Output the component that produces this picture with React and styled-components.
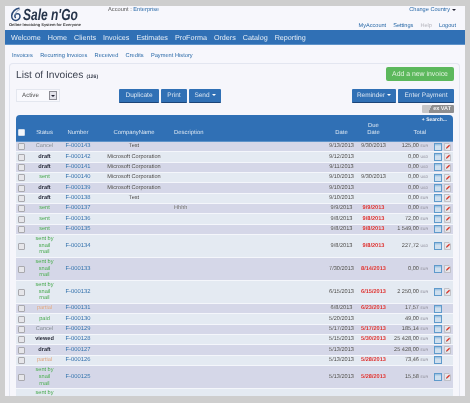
import React from 'react'
import styled, { createGlobalStyle } from 'styled-components'

const GlobalStyle = createGlobalStyle`
  html, body {
    margin: 0;
    padding: 0;
    height: 403px;
    overflow: hidden;
    background: #cecece;
    font-family: "Liberation Sans", Arial, sans-serif;
    text-rendering: geometricPrecision;
  }
  * { box-sizing: border-box; }
`

const Page = styled.div`
  width: 460px;
  height: 390px;
  margin: 6px 5px 0;
  background: #f7f7fc;
  overflow: hidden;
  filter: blur(0.3px);
`

const Header = styled.div`
  height: 24px;
  display: flex;
  padding: 0 5px 0 4px;
`

const Logo = styled.div`
  width: 99px;
  color: #2a3546;
`

const LogoTop = styled.div`
  display: flex;
  align-items: flex-end;
  height: 16px;
  gap: 1px;
  padding-left: 1px;
`

const LogoName = styled.span`
  font-size: 16px;
  line-height: 16px;
  font-weight: bold;
  font-style: italic;
  color: #26344a;
  transform: translateY(1.5px) scaleX(0.75);
  transform-origin: left center;
  white-space: nowrap;
`

const Tagline = styled.div`
  font-size: 4px;
  line-height: 5px;
  font-weight: bold;
  color: #333;
  white-space: nowrap;
`

const AccountLine = styled.div`
  flex: 1;
  padding-top: 1px;
  font-size: 5.7px;
  color: #555;
  span { color: #2a6aa8; }
`

const TopRight = styled.div`
  display: flex;
  flex-direction: column;
  align-items: flex-end;
  justify-content: space-between;
  padding: 1px 4px 1px 0;
  font-size: 5.6px;
  color: #2a6aa8;
`

const TopLinks = styled.div`
  display: flex;
  gap: 7px;
`

const TopLink = styled.span`
  color: ${props => props.muted ? '#b5b5bd' : '#2a6aa8'};
`

const Caret = styled.i`
  display: inline-block;
  margin-left: 2px;
  border-left: 2px solid transparent;
  border-right: 2px solid transparent;
  border-top: 2px solid ${props => props.color || '#223'};
  vertical-align: middle;
`

const Nav = styled.div`
  height: 15px;
  display: flex;
  align-items: center;
  gap: 7px;
  padding-left: 6px;
  background: #3070b5;
  border-bottom: 1px solid #5f93c9;
  font-size: 7.2px;
  color: #e6eef7;
`

const SubNav = styled.div`
  height: 18px;
  display: flex;
  align-items: center;
  gap: 7.3px;
  padding: 3px 0 0 7px;
  font-size: 5.7px;
  color: #2a6aa8;
`

const Panel = styled.div`
  margin: 0 5px 0 4px;
  height: 340px;
  padding: 0 6px;
  border: 1px solid #e3e6f0;
  border-bottom: 0;
  border-radius: 4px 4px 0 0;
  background: #f6f6fb;
`

const TitleRow = styled.div`
  display: flex;
  justify-content: space-between;
  align-items: flex-start;
  height: 24px;
  padding-top: 3px;
`

const Title = styled.h1`
  margin: 3px 0 0;
  font-size: 10.2px;
  font-weight: normal;
  color: #3c4250;
  small {
    font-size: 5px;
    font-weight: bold;
    margin-left: 3px;
  }
`

const GreenButton = styled.div`
  width: 68px;
  height: 14px;
  display: flex;
  align-items: center;
  justify-content: center;
  margin-right: -1px;
  background: #5cb85c;
  border-radius: 2px;
  color: #e4f3e2;
  font-size: 6.9px;
`

const ToolRow = styled.div`
  display: flex;
  align-items: center;
  height: 15px;
`

const SelectBox = styled.div`
  flex: none;
  width: 44px;
  height: 13px;
  display: flex;
  align-items: center;
  justify-content: space-between;
  padding: 0 2px 0 5px;
  border: 1px solid #e4e7ef;
  background: #f9f9fd;
  font-size: 6.2px;
  color: #555;
`

const SelectArrow = styled.div`
  width: 8px;
  height: 9px;
  display: flex;
  align-items: center;
  justify-content: center;
  background: #e3e3ea;
  border: 1px solid #8b8b93;
  i { margin: 0; }
`

const ButtonGroup = styled.div`
  flex: none;
  display: flex;
  gap: 2px;
  margin-left: ${props => props.left || 0}px;
`

const BlueButton = styled.div`
  width: ${props => props.w}px;
  height: 14px;
  display: flex;
  align-items: center;
  justify-content: center;
  background: #3070b5;
  border-bottom: 1px solid #1b4478;
  border-radius: 1px;
  color: #d9e5f2;
  font-size: 6.5px;
`

const VatRow = styled.div`
  display: flex;
  justify-content: flex-end;
  height: 13px;
  padding-top: 2px;
  margin-right: -1px;
`

const VatToggle = styled.div`
  width: 32px;
  height: 8px;
  display: flex;
  align-items: center;
  justify-content: flex-end;
  padding-right: 3px;
  background: linear-gradient(115deg, #c6c6c8 0 28%, #8e8e90 28% 100%);
  border-radius: 1px;
  color: #f2f2f2;
  font-size: 5.5px;
  font-weight: bold;
`

const Table = styled.div`
  width: 437px;
  margin-top: -1px;
`

const cols = '11px 35px 32px 80px 148px 39px 25px 42px 25px'

const Head = styled.div`
  position: relative;
  display: grid;
  grid-template-columns: ${cols};
  align-items: end;
  height: 27px;
  padding-bottom: 5px;
  background: #3070b5;
  border-radius: 4px 4px 0 0;
  border-bottom: 1px solid #5f93c9;
  color: #dbe6f2;
  font-size: 5.9px;
  line-height: 6.5px;
  text-align: center;
`

const HeadLeft = styled.span`
  text-align: left;
`

const HeadRight = styled.span`
  text-align: right;
  padding-right: 2px;
`

const SearchLink = styled.span`
  position: absolute;
  top: 2px;
  right: 6px;
  color: #f0f4fa;
  font-size: 5px;
  font-weight: bold;
`

const Row = styled.div`
  display: grid;
  grid-template-columns: ${cols};
  align-items: center;
  height: ${props => props.tall ? 23 : 10.35}px;
  background: ${props => props.odd ? '#d5d7e8' : '#e4eaf2'};
  border-bottom: 1px solid #f4f6fb;
  font-size: 5.6px;
  line-height: 6.8px;
  text-align: center;
  color: #484848;
  text-shadow: 0 0 1px rgba(255, 255, 255, 0.7);
`

const Check = styled.span`
  display: block;
  width: 7px;
  height: 7px;
  margin-left: 2px;
  background: ${props => props.head ? '#f4f6fa' : '#e6e6ea'};
  border: 1px solid ${props => props.head ? '#cfdbea' : '#a9a9ae'};
  border-radius: 1px;
`

const statusColors = {
  Cancel: '#7d8591',
  draft: '#23283a',
  viewed: '#1c2030',
  sent: '#3fa34a',
  'sent by snail mail': '#3fa34a',
  paid: '#3fa34a',
  partial: '#d9a07c',
}

const Status = styled.span`
  color: ${props => statusColors[props.value]};
  font-weight: ${props => props.value === 'draft' || props.value === 'viewed' ? 'bold' : 'normal'};
  padding: 0 7px;
  white-space: ${props => props.value === 'sent by snail mail' ? 'normal' : 'nowrap'};
`

const InvoiceNo = styled.span`
  color: #2a6aa8;
  font-size: 5.8px;
`

const Desc = styled.span`
  text-align: left;
  color: #666;
`

const DueDate = styled.span`
  white-space: nowrap;
  color: ${props => props.late ? '#d92d2d' : '#484848'};
  font-weight: ${props => props.late ? 'bold' : 'normal'};
`

const DateText = styled.span`
  white-space: nowrap;
`

const Total = styled.span`
  text-align: right;
  white-space: nowrap;
  small {
    font-size: 3.6px;
    margin-left: 1.5px;
    color: #778;
  }
`

const Actions = styled.span`
  display: flex;
  align-items: center;
  gap: 1.5px;
  padding-left: 6px;
`

const CalendarIcon = () => (
  <svg width="8" height="8" viewBox="0 0 8 8">
    <rect x="0.5" y="0.5" width="7" height="7" fill="#cfdfee" stroke="#5f9acb" />
    <rect x="1" y="1" width="6" height="1.4" fill="#9fc3e2" />
  </svg>
)

const NoteIcon = () => (
  <svg width="7" height="8" viewBox="0 0 7 8">
    <path d="M0.5 0.5H5L6.5 2V7.5H0.5Z" fill="#e8e8ec" stroke="#b3b3b8" strokeWidth="0.7" />
    <path d="M2.6 5L5.6 2.2" stroke="#d8392f" strokeWidth="1.5" />
    <path d="M1.8 6.2L2.8 5.2" stroke="#666" strokeWidth="0.7" />
  </svg>
)

const LogoMark = () => (
  <svg width="12" height="15" viewBox="0 0 11 15">
    <path d="M8.5 1.2C5 1.6 1.6 4.8 1.2 8.6C1 11.6 3 13.6 5.6 13.4C8.2 13.1 9.8 11 9.5 8.9C9.2 7 7.4 6.2 5.8 6.9C4.4 7.5 3.9 9.3 4.9 10.4" fill="none" stroke="#2b4a78" strokeWidth="1.5" strokeLinecap="round" />
    <path d="M4.6 8C5.2 5.4 6.6 3.4 9.6 2.4" fill="none" stroke="#7a8ea8" strokeWidth="0.8" />
  </svg>
)

const menu = ['Welcome', 'Home', 'Clients', 'Invoices', 'Estimates', 'ProForma', 'Orders', 'Catalog', 'Reporting']
const subMenu = ['Invoices', 'Recurring Invoices', 'Received', 'Credits', 'Payment History']

const SNAIL = 'sent by snail mail'
const MS = 'Microsoft Corporation'

const invoices = [
  { no: '143', status: 'Cancel', company: 'Test', date: '9/13/2013', due: '9/30/2013', total: '125,00', cur: 'EUR' },
  { no: '142', status: 'draft', company: MS, date: '9/12/2013', total: '0,00', cur: 'USD' },
  { no: '141', status: 'draft', company: MS, date: '9/11/2013', total: '0,00', cur: 'USD' },
  { no: '140', status: 'sent', company: MS, date: '9/10/2013', due: '9/30/2013', total: '0,00', cur: 'USD' },
  { no: '139', status: 'draft', company: MS, date: '9/10/2013', total: '0,00', cur: 'USD' },
  { no: '138', status: 'draft', company: 'Test', date: '9/10/2013', total: '0,00', cur: 'EUR' },
  { no: '137', status: 'sent', desc: 'Hhhh', date: '9/9/2013', due: '9/9/2013', late: true, total: '0,00', cur: 'EUR' },
  { no: '136', status: 'sent', date: '9/8/2013', due: '9/8/2013', late: true, total: '72,00', cur: 'EUR' },
  { no: '135', status: 'sent', date: '9/8/2013', due: '9/8/2013', late: true, total: '1 549,00', cur: 'EUR' },
  { no: '134', status: SNAIL, date: '9/8/2013', due: '9/8/2013', late: true, total: '227,72', cur: 'USD' },
  { no: '133', status: SNAIL, date: '7/30/2013', due: '8/14/2013', late: true, total: '0,00', cur: 'EUR' },
  { no: '132', status: SNAIL, date: '6/15/2013', due: '6/15/2013', late: true, total: '2 250,00', cur: 'EUR' },
  { no: '131', status: 'partial', date: '6/8/2013', due: '6/23/2013', late: true, total: '17,57', cur: 'EUR', single: true },
  { no: '130', status: 'paid', date: '5/20/2013', total: '49,00', cur: 'EUR', single: true },
  { no: '129', status: 'Cancel', date: '5/17/2013', due: '5/17/2013', late: true, total: '185,14', cur: 'EUR' },
  { no: '128', status: 'viewed', date: '5/15/2013', due: '5/30/2013', late: true, total: '25 428,00', cur: 'EUR' },
  { no: '127', status: 'draft', date: '5/13/2013', total: '25 428,00', cur: 'EUR' },
  { no: '126', status: 'partial', date: '5/13/2013', due: '5/28/2013', late: true, total: '73,46', cur: 'EUR', single: true },
  { no: '125', status: SNAIL, date: '5/13/2013', due: '5/28/2013', late: true, total: '15,58', cur: 'EUR' },
]

const App = () => {
  return (
    <React.Fragment>
      <GlobalStyle />
      <Page>
        <Header>
          <Logo>
            <LogoTop>
              <LogoMark />
              <LogoName>Sale n'Go</LogoName>
            </LogoTop>
            <Tagline>Online Invoicing System for Everyone</Tagline>
          </Logo>
          <AccountLine>Account : <span>Enterprise</span></AccountLine>
          <TopRight>
            <div>Change Country<Caret /></div>
            <TopLinks>
              <TopLink>MyAccount</TopLink>
              <TopLink>Settings</TopLink>
              <TopLink muted>Help</TopLink>
              <TopLink>Logout</TopLink>
            </TopLinks>
          </TopRight>
        </Header>
        <Nav>
          {menu.map(item => <span key={item}>{item}</span>)}
        </Nav>
        <SubNav>
          {subMenu.map(item => <span key={item}>{item}</span>)}
        </SubNav>
        <Panel>
          <TitleRow>
            <Title>List of Invoices<small>(126)</small></Title>
            <GreenButton>Add a new invoice</GreenButton>
          </TitleRow>
          <ToolRow>
            <SelectBox>Active<SelectArrow><Caret /></SelectArrow></SelectBox>
            <ButtonGroup left={59}>
              <BlueButton w={40}>Duplicate</BlueButton>
              <BlueButton w={26}>Print</BlueButton>
              <BlueButton w={32}>Send<Caret color="#fff" /></BlueButton>
            </ButtonGroup>
            <ButtonGroup left={131}>
              <BlueButton w={44}>Reminder<Caret color="#fff" /></BlueButton>
              <BlueButton w={56}>Enter Payment</BlueButton>
            </ButtonGroup>
          </ToolRow>
          <VatRow><VatToggle>ex VAT</VatToggle></VatRow>
          <Table>
            <Head>
              <Check head />
              <span>Status</span>
              <span>Number</span>
              <span>CompanyName</span>
              <HeadLeft>Description</HeadLeft>
              <span>Date</span>
              <span>Due<br />Date</span>
              <HeadRight>Total</HeadRight>
              <span />
              <SearchLink>+ Search...</SearchLink>
            </Head>
            {invoices.map((inv, i) => (
              <Row key={inv.no} odd={i % 2 === 0} tall={inv.status === SNAIL}>
                <Check />
                <Status value={inv.status}>{inv.status}</Status>
                <InvoiceNo>F-000{inv.no}</InvoiceNo>
                <span>{inv.company}</span>
                <Desc>{inv.desc}</Desc>
                <DateText>{inv.date}</DateText>
                <DueDate late={inv.late}>{inv.due}</DueDate>
                <Total>{inv.total}<small>{inv.cur}</small></Total>
                <Actions>
                  <CalendarIcon />
                  {!inv.single && <NoteIcon />}
                </Actions>
              </Row>
            ))}
            <Row tall>
              <Check />
              <Status value={SNAIL}>{SNAIL}</Status>
            </Row>
          </Table>
        </Panel>
      </Page>
    </React.Fragment>
  )
}

export default App
